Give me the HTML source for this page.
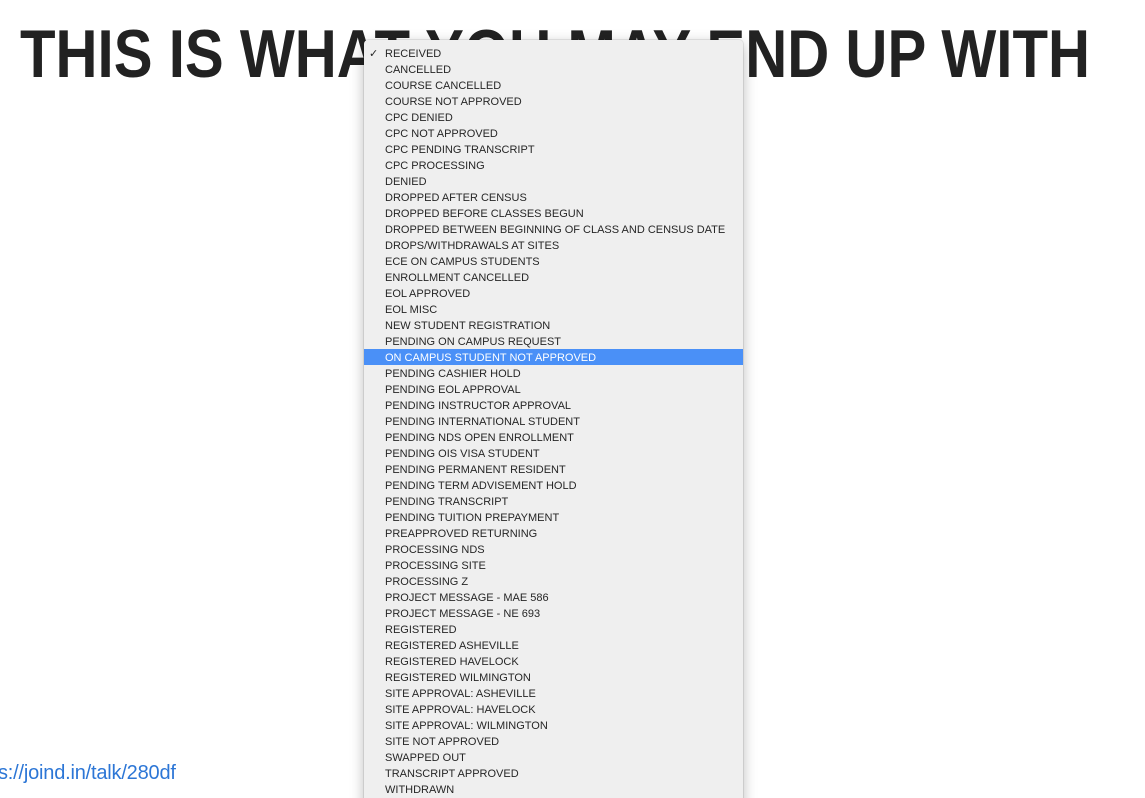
<!DOCTYPE html>
<html><head><meta charset="utf-8"><style>
html,body{margin:0;padding:0;width:1145px;height:798px;overflow:hidden;background:#fff;position:relative;font-family:"Liberation Sans",sans-serif}
svg.t{position:absolute;left:0;top:0}
.menu{position:absolute;left:364px;top:40px;width:379px;height:770px;background:#efefef;box-shadow:0 4px 14px rgba(0,0,0,.28),0 0 0 1px rgba(0,0,0,.08);border-radius:4px;padding-top:5px;box-sizing:border-box}
.menu div{height:16px;line-height:18px;font-size:11px;color:#262626;padding-left:21px;letter-spacing:0;position:relative;white-space:nowrap}
.menu div.sel{background:#4a90f7;color:#fff}
.ck{position:absolute;left:5px;top:0;font-size:11px}
.link{position:absolute;left:-2px;top:762px;font-size:20px;color:#2c76d6;letter-spacing:-.2px}
</style></head><body>
<svg class="t" width="1145" height="100"><text x="20" y="77" font-family="Liberation Sans" font-weight="bold" font-size="68" fill="#222" textLength="1070" lengthAdjust="spacingAndGlyphs">THIS IS WHAT YOU MAY END UP WITH</text></svg>
<div class="link">s://joind.in/talk/280df</div>
<div class="menu">
<div><span class="ck">✓</span>RECEIVED</div>
<div>CANCELLED</div>
<div>COURSE CANCELLED</div>
<div>COURSE NOT APPROVED</div>
<div>CPC DENIED</div>
<div>CPC NOT APPROVED</div>
<div>CPC PENDING TRANSCRIPT</div>
<div>CPC PROCESSING</div>
<div>DENIED</div>
<div>DROPPED AFTER CENSUS</div>
<div>DROPPED BEFORE CLASSES BEGUN</div>
<div>DROPPED BETWEEN BEGINNING OF CLASS AND CENSUS DATE</div>
<div>DROPS/WITHDRAWALS AT SITES</div>
<div>ECE ON CAMPUS STUDENTS</div>
<div>ENROLLMENT CANCELLED</div>
<div>EOL APPROVED</div>
<div>EOL MISC</div>
<div>NEW STUDENT REGISTRATION</div>
<div>PENDING ON CAMPUS REQUEST</div>
<div class="sel">ON CAMPUS STUDENT NOT APPROVED</div>
<div>PENDING CASHIER HOLD</div>
<div>PENDING EOL APPROVAL</div>
<div>PENDING INSTRUCTOR APPROVAL</div>
<div>PENDING INTERNATIONAL STUDENT</div>
<div>PENDING NDS OPEN ENROLLMENT</div>
<div>PENDING OIS VISA STUDENT</div>
<div>PENDING PERMANENT RESIDENT</div>
<div>PENDING TERM ADVISEMENT HOLD</div>
<div>PENDING TRANSCRIPT</div>
<div>PENDING TUITION PREPAYMENT</div>
<div>PREAPPROVED RETURNING</div>
<div>PROCESSING NDS</div>
<div>PROCESSING SITE</div>
<div>PROCESSING Z</div>
<div>PROJECT MESSAGE - MAE 586</div>
<div>PROJECT MESSAGE - NE 693</div>
<div>REGISTERED</div>
<div>REGISTERED ASHEVILLE</div>
<div>REGISTERED HAVELOCK</div>
<div>REGISTERED WILMINGTON</div>
<div>SITE APPROVAL: ASHEVILLE</div>
<div>SITE APPROVAL: HAVELOCK</div>
<div>SITE APPROVAL: WILMINGTON</div>
<div>SITE NOT APPROVED</div>
<div>SWAPPED OUT</div>
<div>TRANSCRIPT APPROVED</div>
<div>WITHDRAWN</div>
</div>
</body></html>
